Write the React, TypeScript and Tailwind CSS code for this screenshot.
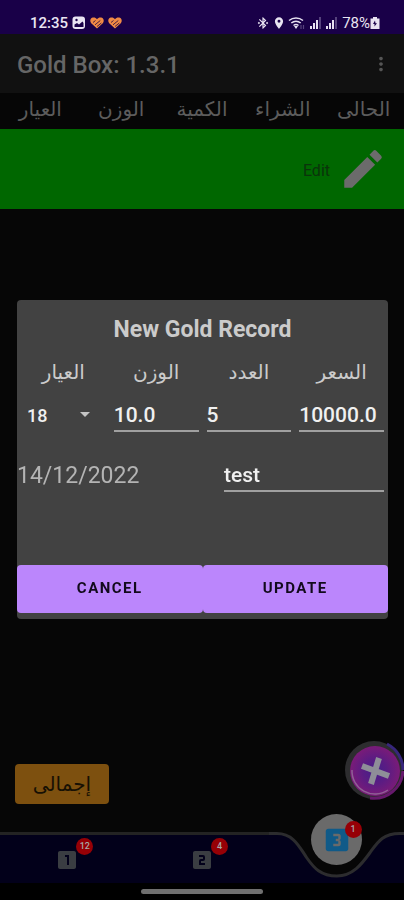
import React, { useState } from 'react';
import {
  MdBluetoothConnected,
  MdEdit,
  MdLocationOn,
  MdLooks3,
  MdLooksOne,
  MdLooksTwo,
  MdMoreVert,
} from 'react-icons/md';

const columns = ['العيار', 'الوزن', 'الكمية', 'الشراء', 'الحالى'];

const tabs = [
  { id: 1, label: 'Box 1', icon: MdLooksOne, count: 12 },
  { id: 2, label: 'Box 2', icon: MdLooksTwo, count: 4 },
];

const arabicFont = "font-['DejaVu_Sans',sans-serif]";
const labelClass = `block text-center text-xl leading-8 font-normal text-[#cbcbcb] ${arabicFont}`;
const inputClass =
  'block h-8 w-full min-w-0 border-b-2 border-[#a0a0a0] bg-transparent p-0 text-[21px] leading-8 font-medium text-[#f0f0f0] outline-none';

function HeartIcon() {
  return (
    <svg viewBox="0 0 14 12" className="h-3 w-3.5" aria-hidden="true">
      <path
        d="M7 11.6 1.2 6.2C-.3 4.6.1 1.8 2 .8 3.8-.1 5.8.5 7 2.2 8.200.5 10.200-.1 12 .8c1.900 1 2.300 3.800.8 5.400Z"
        fill="#f08a45"
      />
      <path d="m3 5.500 2.500-2M5 7.800l5.300-4.300M7 9.500l4.300-3.500" fill="none" stroke="#3a1340" strokeWidth="0.900" />
    </svg>
  );
}

function SignalIcon({ bars }: { bars: number }) {
  return (
    <svg viewBox="0 0 12 12" className="size-3" aria-hidden="true">
      {[0, 1, 2, 3].map((i) => (
        <rect key={i} x={i * 3} y={9 - i * 3} width="2" height={3 + i * 3} fill={i < bars ? '#e6e0f0' : '#55427c'} />
      ))}
    </svg>
  );
}

function StatusBar() {
  return (
    <header className="flex h-[34px] items-end justify-between bg-[#190048] pr-6 pb-px pl-[30px] text-[#e9e4f2]">
      <div className="flex h-5 items-center gap-1">
        <span className="text-[15px] leading-5 font-medium">12:35</span>
        <svg viewBox="0 0 14 14" className="size-3.5" aria-hidden="true">
          <rect x="0.500" y="0.500" width="12.500" height="12.500" rx="3" fill="#e9e4f2" />
          <path d="M2.500 11V8.500L5 7l2 1.500L10.500 5.500 11.500 7v4Z" fill="#190048" />
          <circle cx="4.500" cy="4" r="1.200" fill="#190048" />
        </svg>
        <HeartIcon />
        <HeartIcon />
      </div>
      <div className="flex h-5 items-center gap-1">
        <div className="flex items-center gap-0.5">
          <MdBluetoothConnected className="size-3.5" />
          <MdLocationOn className="size-3.5" />
          <svg viewBox="0 0 18 14" className="h-3.5 w-[18px]" aria-hidden="true">
            <path d="M1 4.500a11 11 0 0 1 14 0M3.300 7a7.500 7.500 0 0 1 9.400 0M5.500 9.500a4 4 0 0 1 5 0" fill="none" stroke="#e6e0f0" strokeWidth="1.500" />
            <path d="m6 10 2 3 2-3Z" fill="#e6e0f0" />
            <path d="M13 9v4M15.500 9v4" stroke="#55427c" strokeWidth="1.200" />
          </svg>
        </div>
        <SignalIcon bars={3} />
        <SignalIcon bars={3} />
        <span className="flex items-center">
          <span className="text-[15px] leading-5">78%</span>
          <svg viewBox="0 0 10 12" className="h-3 w-2.5" aria-hidden="true">
            <path d="M3 0h4v1.500h2.500V12H.5V1.500H3Z" fill="#e9e4f2" />
            <path d="M5 3.500 3 7h1.500v2.500L7 6.300H5.500Z" fill="#190048" />
          </svg>
        </span>
      </div>
    </header>
  );
}

function Badge({ count }: { count: number }) {
  return (
    <span className="absolute -top-2.5 -right-3.5 flex size-[17px] items-center justify-center rounded-full bg-[#960006] text-[9px] leading-none font-medium text-[#a8a8a8]">
      {count}
    </span>
  );
}

function BottomNav() {
  return (
    <nav className="grid h-[51px] grid-cols-3">
      {tabs.map(({ id, label, icon: Icon, count }) => (
        <div key={id} className="flex items-center justify-center border-t-[3px] border-[#232323] bg-[#02001a]">
          <button aria-label={label} className="relative mt-0.5 text-[#3a3d42]">
            <Icon className="size-6" />
            <Badge count={count} />
          </button>
        </div>
      ))}
      <div className="relative">
        <svg viewBox="0 0 135 51" preserveAspectRatio="none" className="block h-full w-full" aria-hidden="true">
          <path
            d="M-2 1.500H8C25 1.500 31 16 38 26S52 44 68 44 93 32 101 21 114 1.500 131 1.500H137V53H-2Z"
            fill="#02001a"
          />
          <path
            d="M-2 1.500H8C25 1.500 31 16 38 26S52 44 68 44 93 32 101 21 114 1.500 131 1.500H137"
            fill="none"
            stroke="#2c2c2e"
            strokeWidth="3"
          />
        </svg>
        <div className="absolute inset-x-0 -top-[18px] flex justify-center">
          <button aria-label="Box 3" className="flex size-[51px] items-center justify-center rounded-full bg-[#6a6a6a] text-[#105a88]">
            <span className="relative">
              <MdLooks3 className="size-[30px]" />
              <span className="absolute top-1.5 right-1">
                <Badge count={1} />
              </span>
            </span>
          </button>
        </div>
      </div>
    </nav>
  );
}

function AddButton() {
  return (
    <button aria-label="Add record" className="mb-1 rounded-full">
      <svg viewBox="0 0 60 60" className="size-[60px]" aria-hidden="true">
        <defs>
          <radialGradient id="add-fill">
            <stop offset="0" stopColor="#42208a" />
            <stop offset="0.500" stopColor="#5b1c83" />
            <stop offset="1" stopColor="#7a1b78" />
          </radialGradient>
        </defs>
        <circle cx="30" cy="30" r="29" fill="#2d2d2f" />
        <path d="M43 4a29 29 0 0 1 16 26" fill="none" stroke="#37267c" strokeWidth="3" />
        <path d="M59 31a29 29 0 0 1-33 27" fill="none" stroke="#66196c" strokeWidth="3" />
        <circle cx="31" cy="31" r="25" fill="url(#add-fill)" />
        <path d="M8 30a23 23 0 0 0 36 20" fill="none" stroke="#906096" strokeWidth="1.500" />
        <path d="m35 18-8 26M18 26l27 10" stroke="#8e8e98" strokeWidth="6" />
      </svg>
    </button>
  );
}

function RecordDialog() {
  const [karat, setKarat] = useState('18');
  const [weight, setWeight] = useState('10.0');
  const [count, setCount] = useState('5');
  const [price, setPrice] = useState('10000.0');
  const [note, setNote] = useState('test');

  return (
    <div className="fixed inset-0 flex items-center justify-center pt-[18px] pr-4 pl-[17px]">
      <form
        role="dialog"
        aria-labelledby="dialog-title"
        onSubmit={(e) => e.preventDefault()}
        className="w-full max-w-[480px] rounded-sm bg-[#424242] pt-4 pb-1.5"
      >
        <h2 id="dialog-title" className="text-center text-[23px] leading-7 font-bold text-[#cbcbcb]">
          New Gold Record
        </h2>
        <div className="mt-3 grid grid-cols-4">
          <div>
            <label htmlFor="karat" className={labelClass}>العيار</label>
            <div className="relative mt-3">
              <select
                id="karat"
                value={karat}
                onChange={(e) => setKarat(e.target.value)}
                className="block h-8 w-full appearance-none bg-transparent pl-2.5 text-lg font-medium text-[#f0f0f0] outline-none"
              >
                <option>18</option>
                <option>21</option>
                <option>24</option>
              </select>
              <svg viewBox="0 0 10 5" className="pointer-events-none absolute top-3 right-5 h-[5px] w-2.5" aria-hidden="true">
                <path d="M0 0h10L5 5Z" fill="#c4c4c4" />
              </svg>
            </div>
          </div>
          <div className="px-1">
            <label htmlFor="weight" className={labelClass}>الوزن</label>
            <div className="mt-3">
              <input id="weight" value={weight} onChange={(e) => setWeight(e.target.value)} className={inputClass} />
            </div>
          </div>
          <div className="px-1">
            <label htmlFor="count" className={labelClass}>العدد</label>
            <div className="mt-3">
              <input id="count" value={count} onChange={(e) => setCount(e.target.value)} className={inputClass} />
            </div>
          </div>
          <div className="px-1">
            <label htmlFor="price" className={labelClass}>السعر</label>
            <div className="mt-3">
              <input id="price" value={price} onChange={(e) => setPrice(e.target.value)} className={inputClass} />
            </div>
          </div>
        </div>
        <div className="mt-7 flex gap-4 pr-1">
          <button type="button" className="flex-1 text-left text-[23px] leading-8 text-[#b4b4b4]">
            14/12/2022
          </button>
          <div className="w-40">
            <input aria-label="Note" value={note} onChange={(e) => setNote(e.target.value)} className={inputClass} />
          </div>
        </div>
        <div className="mt-[73px] grid grid-cols-2">
          <button type="button" className="h-12 rounded bg-[#bb86fc] text-[15px] font-bold tracking-widest text-[#120a1c]">
            CANCEL
          </button>
          <button type="submit" className="h-12 rounded bg-[#bb86fc] text-[15px] font-bold tracking-widest text-[#120a1c]">
            UPDATE
          </button>
        </div>
      </form>
    </div>
  );
}

export default function App() {
  return (
    <div className="flex min-h-screen flex-col bg-[#060606] font-[Roboto,'Noto_Sans','DejaVu_Sans',sans-serif]">
      <StatusBar />
      <div className="flex h-[59px] items-center justify-between bg-[#111111] pr-3 pl-[17px] text-[#666666]">
        <h1 className="pt-0.5 text-2xl leading-8 font-medium">Gold Box: 1.3.1</h1>
        <button aria-label="More options" className="text-[#555555]">
          <MdMoreVert className="size-[22px]" />
        </button>
      </div>
      <table className="w-full table-fixed border-collapse">
        <thead>
          <tr className="h-9">
            {columns.map((name) => (
              <th key={name} className={`p-0 pb-1 text-center text-xl leading-8 font-normal text-[#5c5c5c] ${arabicFont}`}>
                {name}
              </th>
            ))}
          </tr>
        </thead>
        <tbody>
          <tr className="h-20 bg-[#006700]">
            <td colSpan={5} className="p-0">
              <button className="ml-auto flex items-center gap-2 pr-4 text-[#0b330b]">
                <span className="pt-1 text-base">Edit</span>
                <MdEdit className="size-[50px] text-[#6b6b6b]" />
              </button>
            </td>
          </tr>
        </tbody>
      </table>
      <main className="flex flex-1 items-end justify-between pb-7 pl-[15px]">
        <button className={`h-10 w-[94px] rounded bg-[#7d500f] text-xl leading-8 text-[#171004] ${arabicFont}`}>إجمالى</button>
        <AddButton />
      </main>
      <BottomNav />
      <footer className="flex h-[17px] items-center justify-center bg-black">
        <div className="h-[5px] w-[30%] rounded-full bg-[#6f6f6f]" />
      </footer>
      <RecordDialog />
    </div>
  );
}
